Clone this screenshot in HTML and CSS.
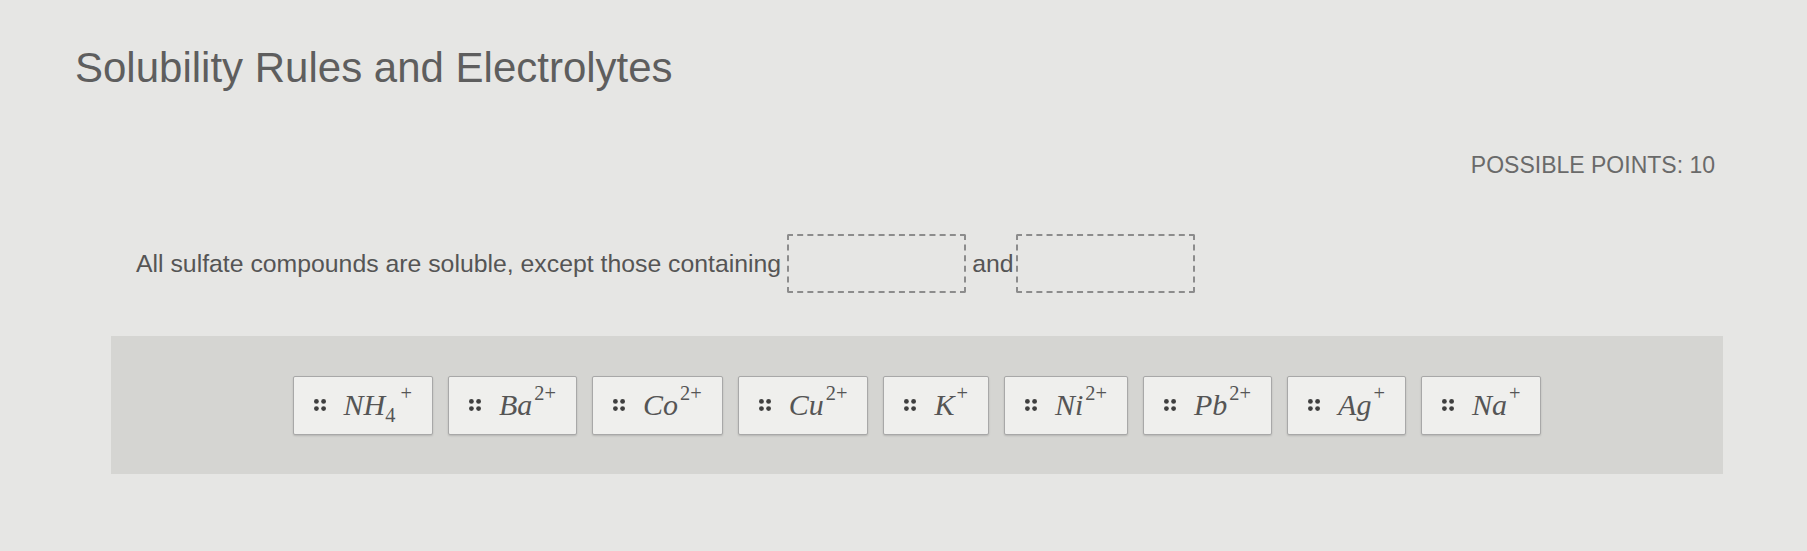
FILE: index.html
```html
<!DOCTYPE html>
<html lang="en">
<head>
    <meta charset="UTF-8">
    <meta name="viewport" content="width=device-width, initial-scale=1.0">
    <title>Solubility Rules and Electrolytes</title>
    <link rel="stylesheet" href="styles.css">
</head>
<body>
    <h1 class="quiz-title">Solubility Rules and Electrolytes</h1>

    <div class="question">
        <div class="points">POSSIBLE POINTS: 10</div>

        <div class="prompt">
            <span>All sulfate compounds are soluble, except those containing</span>
            <span class="drop-slot"></span>
            <span class="joiner">and</span>
            <span class="drop-slot"></span>
        </div>

        <!-- Answer bank: drag these into the blanks -->
        <div class="answer-bank">
            <div class="chip">
                <svg class="grip" viewBox="0 0 10 10"><circle cx="2" cy="2" r="2"/><circle cx="8" cy="2" r="2"/><circle cx="2" cy="8" r="2"/><circle cx="8" cy="8" r="2"/></svg>
                <span class="ion"><i>NH</i><span class="sub">4</span><span class="sup sup-after-sub">+</span></span>
            </div>
            <div class="chip">
                <svg class="grip" viewBox="0 0 10 10"><circle cx="2" cy="2" r="2"/><circle cx="8" cy="2" r="2"/><circle cx="2" cy="8" r="2"/><circle cx="8" cy="8" r="2"/></svg>
                <span class="ion"><i>Ba</i><span class="sup">2+</span></span>
            </div>
            <div class="chip">
                <svg class="grip" viewBox="0 0 10 10"><circle cx="2" cy="2" r="2"/><circle cx="8" cy="2" r="2"/><circle cx="2" cy="8" r="2"/><circle cx="8" cy="8" r="2"/></svg>
                <span class="ion"><i>Co</i><span class="sup">2+</span></span>
            </div>
            <div class="chip">
                <svg class="grip" viewBox="0 0 10 10"><circle cx="2" cy="2" r="2"/><circle cx="8" cy="2" r="2"/><circle cx="2" cy="8" r="2"/><circle cx="8" cy="8" r="2"/></svg>
                <span class="ion"><i>Cu</i><span class="sup">2+</span></span>
            </div>
            <div class="chip">
                <svg class="grip" viewBox="0 0 10 10"><circle cx="2" cy="2" r="2"/><circle cx="8" cy="2" r="2"/><circle cx="2" cy="8" r="2"/><circle cx="8" cy="8" r="2"/></svg>
                <span class="ion"><i>K</i><span class="sup">+</span></span>
            </div>
            <div class="chip">
                <svg class="grip" viewBox="0 0 10 10"><circle cx="2" cy="2" r="2"/><circle cx="8" cy="2" r="2"/><circle cx="2" cy="8" r="2"/><circle cx="8" cy="8" r="2"/></svg>
                <span class="ion"><i>Ni</i><span class="sup">2+</span></span>
            </div>
            <div class="chip">
                <svg class="grip" viewBox="0 0 10 10"><circle cx="2" cy="2" r="2"/><circle cx="8" cy="2" r="2"/><circle cx="2" cy="8" r="2"/><circle cx="8" cy="8" r="2"/></svg>
                <span class="ion"><i>Pb</i><span class="sup">2+</span></span>
            </div>
            <div class="chip">
                <svg class="grip" viewBox="0 0 10 10"><circle cx="2" cy="2" r="2"/><circle cx="8" cy="2" r="2"/><circle cx="2" cy="8" r="2"/><circle cx="8" cy="8" r="2"/></svg>
                <span class="ion"><i>Ag</i><span class="sup">+</span></span>
            </div>
            <div class="chip">
                <svg class="grip" viewBox="0 0 10 10"><circle cx="2" cy="2" r="2"/><circle cx="8" cy="2" r="2"/><circle cx="2" cy="8" r="2"/><circle cx="8" cy="8" r="2"/></svg>
                <span class="ion"><i>Na</i><span class="sup">+</span></span>
            </div>
        </div>
    </div>
</body>
</html>
```

FILE: styles.css
```css
body {
    margin: 0;
    background-color: #e6e6e4;
    font-family: "Liberation Sans", Arial, sans-serif;
    color: #555;
}
.quiz-title {
    margin: 0;
    padding: 44px 0 0 75px;
    font-size: 42px;
    font-weight: normal;
    line-height: 48px;
    color: #5e5e5e;
}
.question {
    margin: 60px 84px 0 111px;
}
.points {
    text-align: right;
    padding-right: 8px;
    font-size: 23px;
    line-height: 26px;
    color: #6a6a6a;
}
.prompt {
    display: flex;
    align-items: center;
    gap: 6px;
    margin-top: 56px;
    padding-left: 25px;
    font-size: 24.8px;
    color: #555;
}
.prompt .joiner {
    margin: 0 -4px 0 0;
}
.drop-slot {
    display: inline-block;
    width: 179px;
    height: 59px;
    box-sizing: border-box;
    border: 2px dashed #8c8c8c;
    border-radius: 2px;
}
.answer-bank {
    display: flex;
    justify-content: center;
    align-items: center;
    gap: 15px;
    margin-top: 43px;
    height: 138px;
    background-color: #d5d5d2;
}
.chip {
    display: flex;
    align-items: center;
    gap: 18px;
    height: 59px;
    box-sizing: border-box;
    padding: 0 20px 0 20px;
    background-color: #efefed;
    border: 1px solid #a8a8a8;
    border-radius: 2px;
    box-shadow: 0 1px 2px rgba(0, 0, 0, 0.15);
}
.grip {
    width: 12px;
    height: 12px;
    fill: #3f3f3f;
}
.ion {
    font-family: "Liberation Serif", "Times New Roman", serif;
    font-size: 30px;
    color: #555;
    white-space: nowrap;
}
.ion i {
    font-style: italic;
}
.sup, .sub {
    font-size: 0.68em;
    position: relative;
}
.sup {
    top: -0.75em;
    margin-left: 2px;
}
.sub {
    top: 0.35em;
}
.sup-after-sub {
    margin-left: 5px;
}
```
